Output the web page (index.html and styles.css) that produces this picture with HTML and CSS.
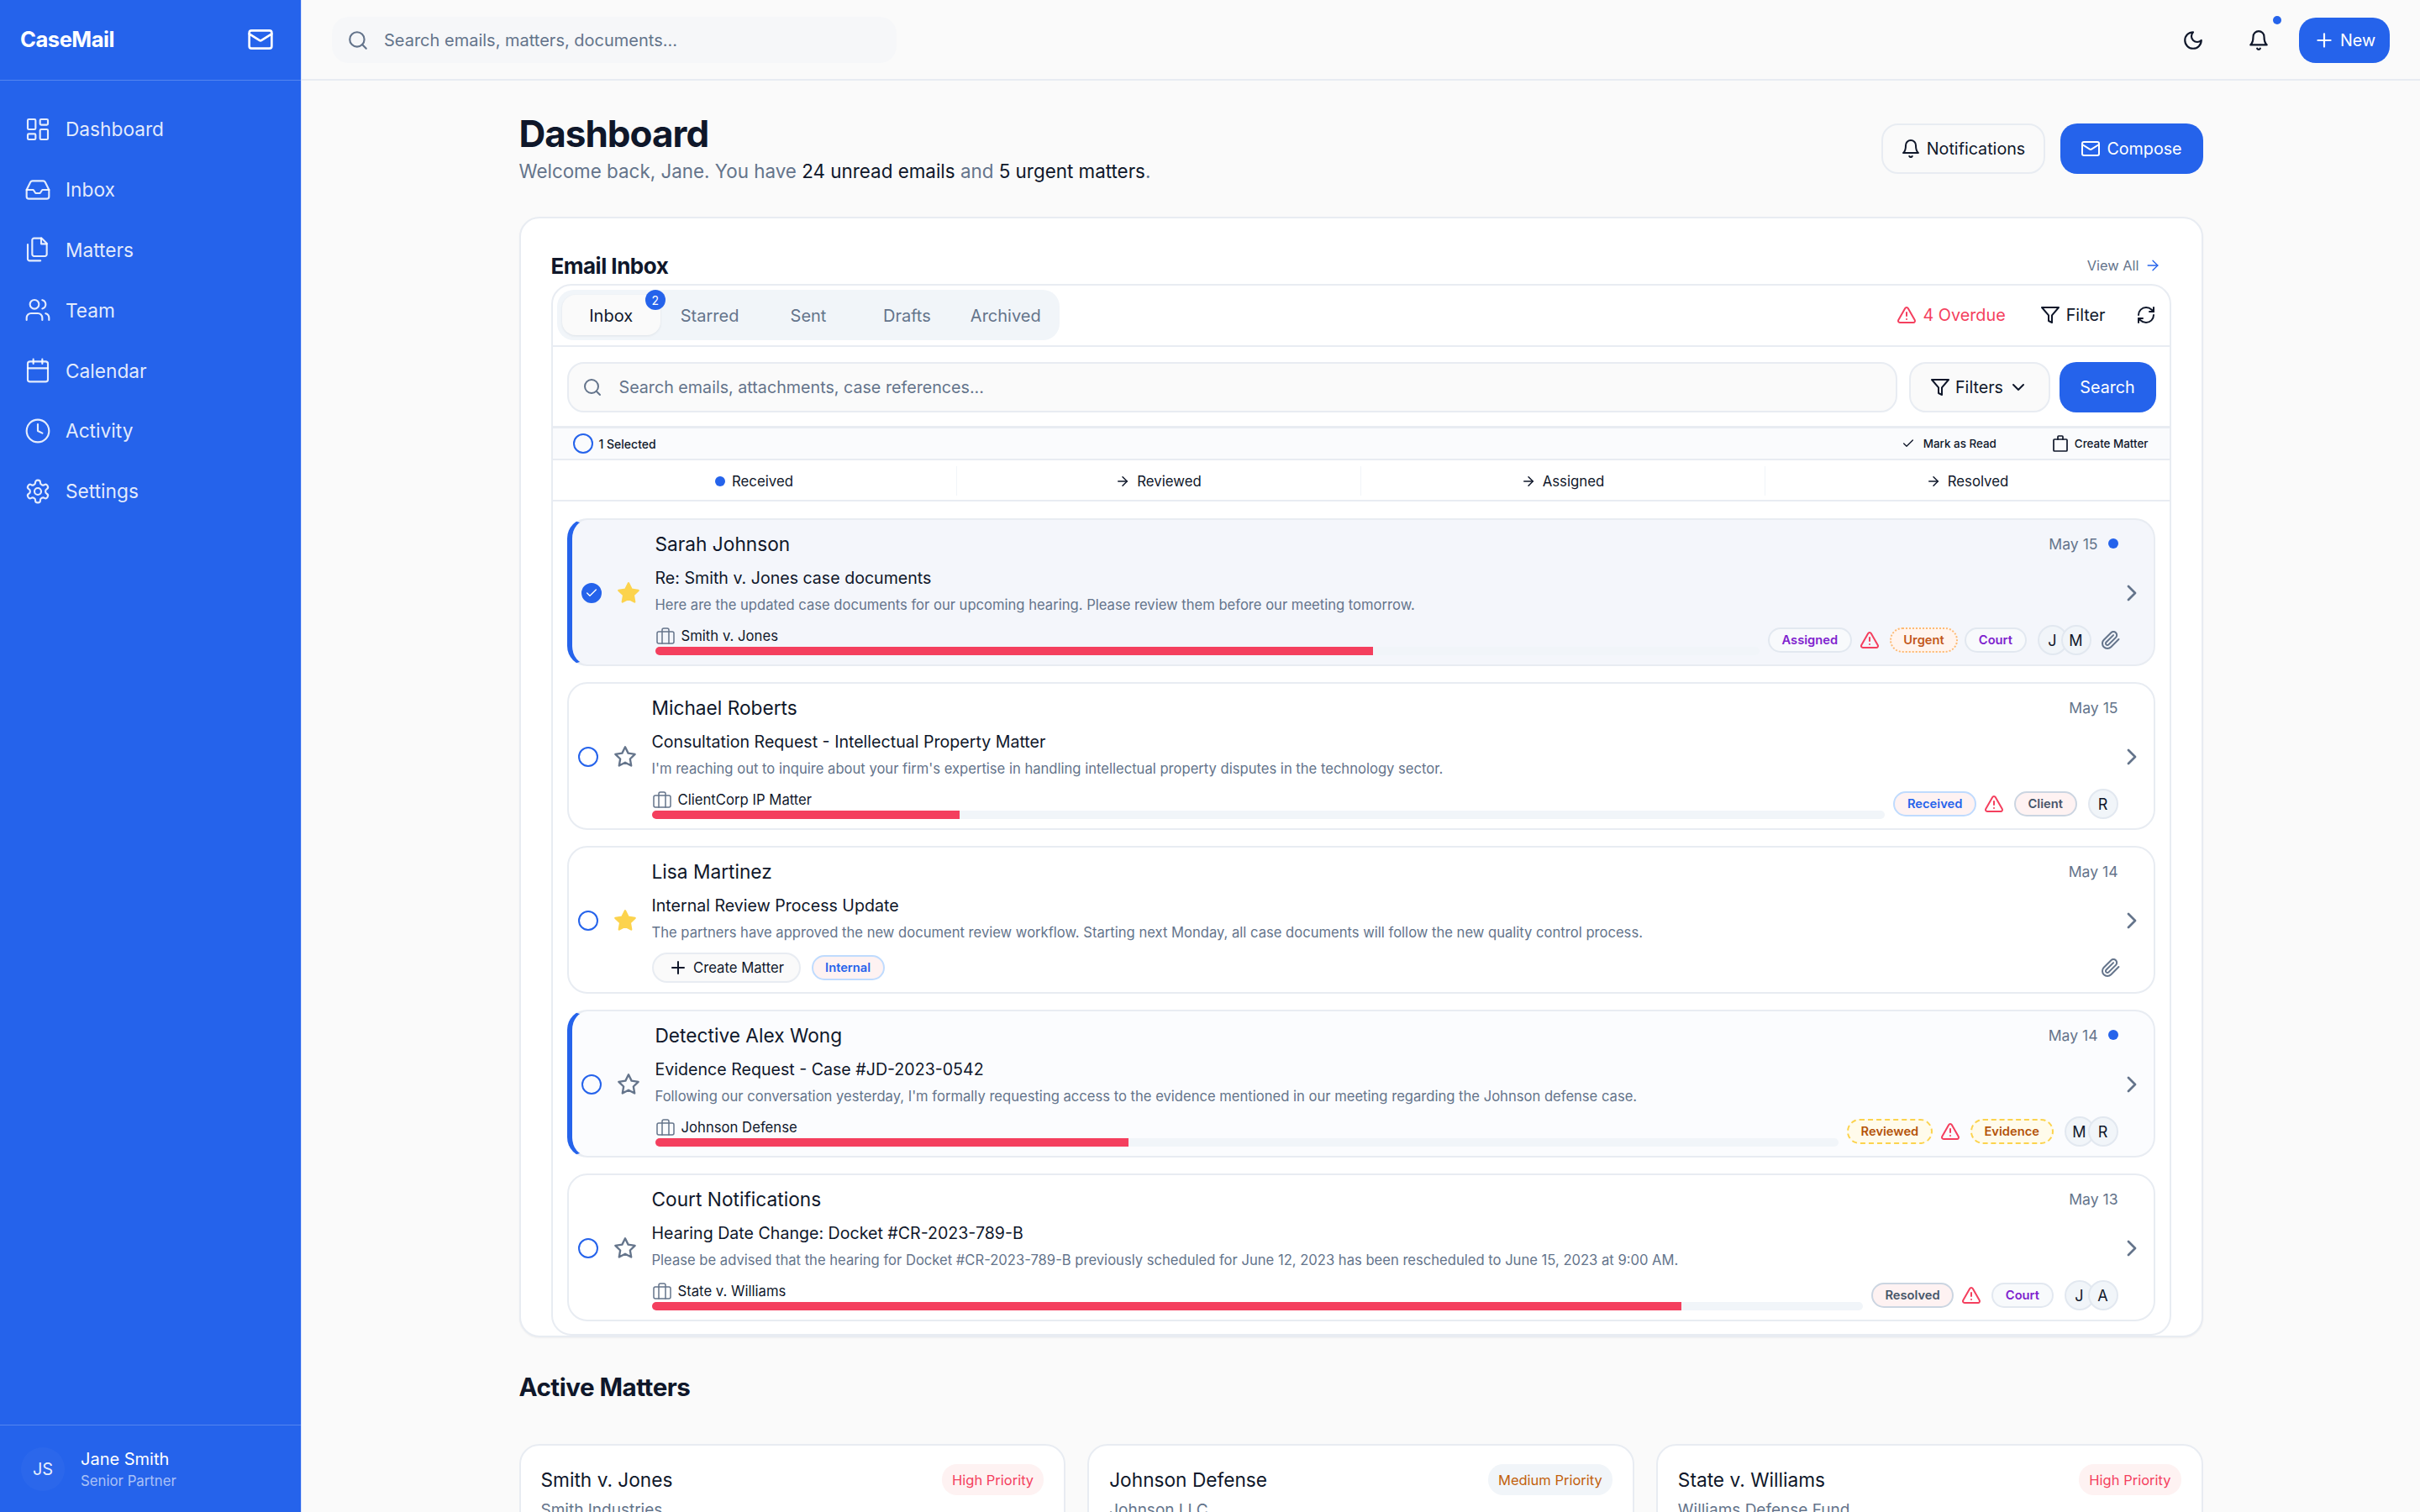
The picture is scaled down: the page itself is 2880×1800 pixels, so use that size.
FILE: index.html
```html
<!DOCTYPE html>
<html>
<head>
  <meta charset="utf-8">
  <title>CaseMail</title>
  <link rel="stylesheet" href="styles.css">
</head>
<body>

  <svg class="sprite" xmlns="http://www.w3.org/2000/svg">
    <symbol id="i-mail" viewBox="0 0 24 24"><rect x="2" y="4" width="20" height="16" rx="2"/><path d="m22 7-8.97 5.7a1.94 1.94 0 0 1-2.06 0L2 7"/></symbol>
    <symbol id="i-dashboard" viewBox="0 0 24 24"><rect x="3" y="3" width="7" height="9" rx="1"/><rect x="14" y="3" width="7" height="5" rx="1"/><rect x="14" y="12" width="7" height="9" rx="1"/><rect x="3" y="16" width="7" height="5" rx="1"/></symbol>
    <symbol id="i-inbox" viewBox="0 0 24 24"><path d="M22 12h-6l-2 3h-4l-2-3H2"/><path d="M5.45 5.11 2 12v6a2 2 0 0 0 2 2h16a2 2 0 0 0 2-2v-6l-3.45-6.89A2 2 0 0 0 16.76 4H7.24a2 2 0 0 0-1.79 1.11z"/></symbol>
    <symbol id="i-files" viewBox="0 0 24 24"><path d="M15.5 2H8.6c-.4 0-.8.2-1.1.5-.3.3-.5.7-.5 1.1v12.8c0 .4.2.8.5 1.1.3.3.7.5 1.1.5h9.8c.4 0 .8-.2 1.1-.5.3-.3.5-.7.5-1.1V6.5L15.5 2z"/><path d="M3 7.6v12.8c0 .4.2.8.5 1.1.3.3.7.5 1.1.5h9.8"/><path d="M15 2v5h5"/></symbol>
    <symbol id="i-users" viewBox="0 0 24 24"><path d="M16 21v-2a4 4 0 0 0-4-4H6a4 4 0 0 0-4 4v2"/><circle cx="9" cy="7" r="4"/><path d="M22 21v-2a4 4 0 0 0-3-3.87"/><path d="M16 3.13a4 4 0 0 1 0 7.75"/></symbol>
    <symbol id="i-calendar" viewBox="0 0 24 24"><rect x="3" y="4" width="18" height="18" rx="2"/><path d="M16 2v4"/><path d="M8 2v4"/><path d="M3 10h18"/></symbol>
    <symbol id="i-clock" viewBox="0 0 24 24"><circle cx="12" cy="12" r="10"/><path d="M12 6v6l4 2"/></symbol>
    <symbol id="i-settings" viewBox="0 0 24 24"><path d="M12.22 2h-.44a2 2 0 0 0-2 2v.18a2 2 0 0 1-1 1.73l-.43.25a2 2 0 0 1-2 0l-.15-.08a2 2 0 0 0-2.73.73l-.22.38a2 2 0 0 0 .73 2.73l.15.1a2 2 0 0 1 1 1.72v.51a2 2 0 0 1-1 1.74l-.15.09a2 2 0 0 0-.73 2.73l.22.38a2 2 0 0 0 2.73.73l.15-.08a2 2 0 0 1 2 0l.43.25a2 2 0 0 1 1 1.73V20a2 2 0 0 0 2 2h.44a2 2 0 0 0 2-2v-.18a2 2 0 0 1 1-1.73l.43-.25a2 2 0 0 1 2 0l.15.08a2 2 0 0 0 2.73-.73l.22-.39a2 2 0 0 0-.73-2.73l-.15-.08a2 2 0 0 1-1-1.74v-.5a2 2 0 0 1 1-1.74l.15-.09a2 2 0 0 0 .73-2.73l-.22-.38a2 2 0 0 0-2.73-.73l-.15.08a2 2 0 0 1-2 0l-.43-.25a2 2 0 0 1-1-1.73V4a2 2 0 0 0-2-2z"/><circle cx="12" cy="12" r="3"/></symbol>
    <symbol id="i-search" viewBox="0 0 24 24"><circle cx="11" cy="11" r="8"/><path d="m21 21-4.3-4.3"/></symbol>
    <symbol id="i-moon" viewBox="0 0 24 24"><path d="M12 3a6 6 0 0 0 9 9 9 9 0 1 1-9-9Z"/></symbol>
    <symbol id="i-bell" viewBox="0 0 24 24"><path d="M6 8a6 6 0 0 1 12 0c0 7 3 9 3 9H3s3-2 3-9"/><path d="M10.3 21a1.94 1.94 0 0 0 3.4 0"/></symbol>
    <symbol id="i-plus" viewBox="0 0 24 24"><path d="M5 12h14"/><path d="M12 5v14"/></symbol>
    <symbol id="i-arrow" viewBox="0 0 24 24"><path d="M5 12h14"/><path d="m12 5 7 7-7 7"/></symbol>
    <symbol id="i-alert" viewBox="0 0 24 24"><path d="m21.73 18-8-14a2 2 0 0 0-3.48 0l-8 14A2 2 0 0 0 4 21h16a2 2 0 0 0 1.73-3Z"/><path d="M12 9v4"/><path d="M12 17h.01"/></symbol>
    <symbol id="i-funnel" viewBox="0 0 24 24"><path d="M22 3H2l8 9.46V19l4 2v-8.54L22 3z"/></symbol>
    <symbol id="i-refresh" viewBox="0 0 24 24"><path d="M3 12a9 9 0 0 1 9-9 9.75 9.75 0 0 1 6.74 2.74L21 8"/><path d="M21 3v5h-5"/><path d="M21 12a9 9 0 0 1-9 9 9.75 9.75 0 0 1-6.74-2.74L3 16"/><path d="M8 16H3v5"/></symbol>
    <symbol id="i-chevron-down" viewBox="0 0 24 24"><path d="m6 9 6 6 6-6"/></symbol>
    <symbol id="i-chevron-right" viewBox="0 0 24 24"><path d="m9 18 6-6-6-6"/></symbol>
    <symbol id="i-check" viewBox="0 0 24 24"><path d="M20 6 9 17l-5-5"/></symbol>
    <symbol id="i-case" viewBox="0 0 24 24"><rect x="4" y="7" width="16" height="14" rx="1"/><path d="M15 7V4a1 1 0 0 0-1-1h-4a1 1 0 0 0-1 1v3"/></symbol>
    <symbol id="i-briefcase" viewBox="0 0 24 24"><rect x="2" y="7" width="20" height="14" rx="2"/><path d="M16 21V5a2 2 0 0 0-2-2h-4a2 2 0 0 0-2 2v16"/></symbol>
    <symbol id="i-star" viewBox="0 0 24 24"><path d="M12 2l3.09 6.26L22 9.27l-5 4.87 1.18 6.88L12 17.77l-6.18 3.25L7 14.14 2 9.27l6.91-1.01L12 2z"/></symbol>
    <symbol id="i-clip" viewBox="0 0 24 24"><path d="m21.44 11.05-9.19 9.19a6 6 0 0 1-8.49-8.49l8.57-8.57A4 4 0 1 1 18 8.84l-8.59 8.57a2 2 0 0 1-2.83-2.83l8.49-8.48"/></symbol>
  </svg>

  <div class="app">

    <aside class="sidebar">
      <div class="brand">
        <span class="brand-name">CaseMail</span>
        <svg class="icon icon-32"><use href="#i-mail"/></svg>
      </div>
      <nav class="nav">
        <a class="nav-item"><svg class="icon nav-icon"><use href="#i-dashboard"/></svg>Dashboard</a>
        <a class="nav-item"><svg class="icon nav-icon"><use href="#i-inbox"/></svg>Inbox</a>
        <a class="nav-item"><svg class="icon nav-icon"><use href="#i-files"/></svg>Matters</a>
        <a class="nav-item"><svg class="icon nav-icon"><use href="#i-users"/></svg>Team</a>
        <a class="nav-item"><svg class="icon nav-icon"><use href="#i-calendar"/></svg>Calendar</a>
        <a class="nav-item"><svg class="icon nav-icon"><use href="#i-clock"/></svg>Activity</a>
        <a class="nav-item"><svg class="icon nav-icon"><use href="#i-settings"/></svg>Settings</a>
      </nav>
      <div class="user">
        <div class="user-avatar">JS</div>
        <div>
          <div class="user-name">Jane Smith</div>
          <div class="user-role">Senior Partner</div>
        </div>
      </div>
    </aside>

    <div class="main">

      <header class="topbar">
        <div class="top-search">
          <svg class="icon icon-26"><use href="#i-search"/></svg>
          <span>Search emails, matters, documents...</span>
        </div>
        <div class="top-actions">
          <svg class="icon icon-26 top-moon"><use href="#i-moon"/></svg>
          <span class="top-bell"><svg class="icon icon-26"><use href="#i-bell"/></svg><i class="bell-dot"></i></span>
          <button class="btn btn-primary btn-new"><svg class="icon icon-26"><use href="#i-plus"/></svg>New</button>
        </div>
      </header>

      <div class="content">

        <div class="page-head">
          <div>
            <h1>Dashboard</h1>
            <p>Welcome back, Jane. You have <b>24 unread emails</b> and <b>5 urgent matters</b>.</p>
          </div>
          <div class="page-actions">
            <button class="btn btn-light"><svg class="icon icon-24"><use href="#i-bell"/></svg>Notifications</button>
            <button class="btn btn-primary"><svg class="icon icon-24"><use href="#i-mail"/></svg>Compose</button>
          </div>
        </div>

        <section class="panel">
          <div class="panel-head">
            <h2>Email Inbox</h2>
            <a class="view-all">View All <svg class="icon icon-20"><use href="#i-arrow"/></svg></a>
          </div>

          <div class="inbox">
            <div class="inbox-tabs">
              <div class="tabs">
                <div class="tab tab-active">Inbox<span class="tab-badge">2</span></div>
                <div class="tab">Starred</div>
                <div class="tab">Sent</div>
                <div class="tab">Drafts</div>
                <div class="tab">Archived</div>
              </div>
              <div class="tab-tools">
                <span class="overdue"><svg class="icon icon-24"><use href="#i-alert"/></svg>4 Overdue</span>
                <span class="tool"><svg class="icon icon-24"><use href="#i-funnel"/></svg>Filter</span>
                <svg class="icon icon-24"><use href="#i-refresh"/></svg>
              </div>
            </div>

            <div class="inbox-search">
              <div class="search-field">
                <svg class="icon icon-24"><use href="#i-search"/></svg>
                <span>Search emails, attachments, case references...</span>
              </div>
              <button class="btn btn-light btn-filters"><svg class="icon icon-24"><use href="#i-funnel"/></svg>Filters<svg class="icon icon-24"><use href="#i-chevron-down"/></svg></button>
              <button class="btn btn-primary btn-search">Search</button>
            </div>

            <div class="bulk-bar">
              <div class="bulk-left"><span class="round-check"></span>1 Selected</div>
              <div class="bulk-right">
                <span class="bulk-read"><svg class="icon icon-16"><use href="#i-check"/></svg>Mark as Read</span>
                <span class="bulk-create"><svg class="icon icon-24"><use href="#i-case"/></svg>Create Matter</span>
              </div>
            </div>

            <div class="stages">
              <div class="stage"><i class="stage-dot"></i>Received</div>
              <div class="stage"><svg class="icon icon-16"><use href="#i-arrow"/></svg>Reviewed</div>
              <div class="stage"><svg class="icon icon-16"><use href="#i-arrow"/></svg>Assigned</div>
              <div class="stage"><svg class="icon icon-16"><use href="#i-arrow"/></svg>Resolved</div>
            </div>

            <div class="email-list">

              <article class="email email-unread email-selected">
                <span class="round-check round-check-on"><svg class="icon icon-16"><use href="#i-check"/></svg></span>
                <svg class="icon star star-on"><use href="#i-star"/></svg>
                <div class="email-body">
                  <div class="email-top"><span class="email-name">Sarah Johnson</span><span class="email-date">May 15<i class="unread-dot"></i></span></div>
                  <div class="email-subject">Re: Smith v. Jones case documents</div>
                  <div class="email-preview">Here are the updated case documents for our upcoming hearing. Please review them before our meeting tomorrow.</div>
                  <div class="email-bottom">
                    <div class="matter">
                      <div class="matter-name"><svg class="icon icon-24"><use href="#i-briefcase"/></svg>Smith v. Jones</div>
                      <div class="bar"><div class="bar-fill" style="width: 65%"></div></div>
                    </div>
                    <div class="tags">
                      <span class="tag tag-purple">Assigned</span>
                      <svg class="icon warn"><use href="#i-alert"/></svg>
                      <span class="tag tag-orange">Urgent</span>
                      <span class="tag tag-purple">Court</span>
                      <div class="avatars"><span>J</span><span>M</span></div>
                      <svg class="icon clip"><use href="#i-clip"/></svg>
                    </div>
                  </div>
                </div>
                <svg class="icon chevron"><use href="#i-chevron-right"/></svg>
              </article>

              <article class="email">
                <span class="round-check"></span>
                <svg class="icon star"><use href="#i-star"/></svg>
                <div class="email-body">
                  <div class="email-top"><span class="email-name">Michael Roberts</span><span class="email-date">May 15</span></div>
                  <div class="email-subject">Consultation Request - Intellectual Property Matter</div>
                  <div class="email-preview">I'm reaching out to inquire about your firm's expertise in handling intellectual property disputes in the technology sector.</div>
                  <div class="email-bottom">
                    <div class="matter">
                      <div class="matter-name"><svg class="icon icon-24"><use href="#i-briefcase"/></svg>ClientCorp IP Matter</div>
                      <div class="bar"><div class="bar-fill" style="width: 25%"></div></div>
                    </div>
                    <div class="tags">
                      <span class="tag tag-blue">Received</span>
                      <svg class="icon warn"><use href="#i-alert"/></svg>
                      <span class="tag tag-grey">Client</span>
                      <div class="avatars"><span>R</span></div>
                    </div>
                  </div>
                </div>
                <svg class="icon chevron"><use href="#i-chevron-right"/></svg>
              </article>

              <article class="email">
                <span class="round-check"></span>
                <svg class="icon star star-on"><use href="#i-star"/></svg>
                <div class="email-body">
                  <div class="email-top"><span class="email-name">Lisa Martinez</span><span class="email-date">May 14</span></div>
                  <div class="email-subject">Internal Review Process Update</div>
                  <div class="email-preview">The partners have approved the new document review workflow. Starting next Monday, all case documents will follow the new quality control process.</div>
                  <div class="email-bottom">
                    <div class="create-row">
                      <button class="create-btn"><svg class="icon icon-24"><use href="#i-plus"/></svg>Create Matter</button>
                      <span class="tag tag-blue">Internal</span>
                    </div>
                    <svg class="icon clip"><use href="#i-clip"/></svg>
                  </div>
                </div>
                <svg class="icon chevron"><use href="#i-chevron-right"/></svg>
              </article>

              <article class="email email-unread">
                <span class="round-check"></span>
                <svg class="icon star"><use href="#i-star"/></svg>
                <div class="email-body">
                  <div class="email-top"><span class="email-name">Detective Alex Wong</span><span class="email-date">May 14<i class="unread-dot"></i></span></div>
                  <div class="email-subject">Evidence Request - Case #JD-2023-0542</div>
                  <div class="email-preview">Following our conversation yesterday, I'm formally requesting access to the evidence mentioned in our meeting regarding the Johnson defense case.</div>
                  <div class="email-bottom">
                    <div class="matter">
                      <div class="matter-name"><svg class="icon icon-24"><use href="#i-briefcase"/></svg>Johnson Defense</div>
                      <div class="bar"><div class="bar-fill" style="width: 40%"></div></div>
                    </div>
                    <div class="tags">
                      <span class="tag tag-amber">Reviewed</span>
                      <svg class="icon warn"><use href="#i-alert"/></svg>
                      <span class="tag tag-amber">Evidence</span>
                      <div class="avatars"><span>M</span><span>R</span></div>
                    </div>
                  </div>
                </div>
                <svg class="icon chevron"><use href="#i-chevron-right"/></svg>
              </article>

              <article class="email">
                <span class="round-check"></span>
                <svg class="icon star"><use href="#i-star"/></svg>
                <div class="email-body">
                  <div class="email-top"><span class="email-name">Court Notifications</span><span class="email-date">May 13</span></div>
                  <div class="email-subject">Hearing Date Change: Docket #CR-2023-789-B</div>
                  <div class="email-preview">Please be advised that the hearing for Docket #CR-2023-789-B previously scheduled for June 12, 2023 has been rescheduled to June 15, 2023 at 9:00 AM.</div>
                  <div class="email-bottom">
                    <div class="matter">
                      <div class="matter-name"><svg class="icon icon-24"><use href="#i-briefcase"/></svg>State v. Williams</div>
                      <div class="bar"><div class="bar-fill" style="width: 85%"></div></div>
                    </div>
                    <div class="tags">
                      <span class="tag tag-grey">Resolved</span>
                      <svg class="icon warn"><use href="#i-alert"/></svg>
                      <span class="tag tag-purple">Court</span>
                      <div class="avatars"><span>J</span><span>A</span></div>
                    </div>
                  </div>
                </div>
                <svg class="icon chevron"><use href="#i-chevron-right"/></svg>
              </article>

            </div>
          </div>
        </section>

        <h2 class="section-title">Active Matters</h2>

        <div class="matter-grid">
          <div class="matter-card">
            <div class="matter-card-top"><span class="matter-title">Smith v. Jones</span><span class="priority priority-high">High Priority</span></div>
            <div class="matter-client">Smith Industries</div>
          </div>
          <div class="matter-card">
            <div class="matter-card-top"><span class="matter-title">Johnson Defense</span><span class="priority priority-medium">Medium Priority</span></div>
            <div class="matter-client">Johnson LLC</div>
          </div>
          <div class="matter-card">
            <div class="matter-card-top"><span class="matter-title">State v. Williams</span><span class="priority priority-high">High Priority</span></div>
            <div class="matter-client">Williams Defense Fund</div>
          </div>
        </div>

      </div>
    </div>
  </div>

</body>
</html>
```

FILE: styles.css
```css
* {
  box-sizing: border-box;
}

body {
  margin: 0;
  font-family: Inter, "Noto Sans", sans-serif;
  color: #0f172a;
  background-color: #fafafa;
}

.sprite {
  display: none;
}

.icon {
  flex: none;
  fill: none;
  stroke: currentColor;
  stroke-width: 2;
  stroke-linecap: round;
  stroke-linejoin: round;
}

.icon-16 { width: 16px; height: 16px; }
.icon-20 { width: 20px; height: 20px; }
.icon-24 { width: 24px; height: 24px; }
.icon-26 { width: 26px; height: 26px; }
.icon-32 { width: 32px; height: 32px; }

.app {
  display: flex;
  height: 100vh;
  overflow: hidden;
}

/* sidebar */
.sidebar {
  width: 359px;
  flex: none;
  display: flex;
  flex-direction: column;
  background-color: #2563eb;
  border-right: 1px solid #d7e2fb;
  color: #fff;
}

.brand {
  height: 96px;
  padding: 0 32px 2px 24px;
  display: flex;
  align-items: center;
  justify-content: space-between;
  border-bottom: 1px solid rgba(255, 255, 255, 0.22);
}

.brand-name {
  font-size: 25.6px;
  font-weight: 700;
  letter-spacing: -0.5px;
}

.nav {
  flex: 1;
  padding-top: 22px;
  display: flex;
  flex-direction: column;
}

.nav-item {
  height: 71.8px;
  padding-left: 29px;
  display: flex;
  align-items: center;
  gap: 17px;
  font-size: 22.7px;
  color: rgba(255, 255, 255, 0.88);
}

.nav-icon {
  width: 32px;
  height: 32px;
  stroke-width: 1.6;
}

.user {
  height: 104px;
  padding-left: 25px;
  display: flex;
  align-items: center;
  gap: 19px;
  border-top: 1px solid rgba(255, 255, 255, 0.22);
}

.user-avatar {
  width: 52px;
  height: 52px;
  border-radius: 50%;
  background-color: rgba(255, 255, 255, 0.03);
  display: flex;
  align-items: center;
  justify-content: center;
  font-size: 20px;
  color: rgba(255, 255, 255, 0.9);
}

.user-name {
  font-size: 20px;
  line-height: 28px;
}

.user-role {
  font-size: 16.8px;
  line-height: 24px;
  color: rgba(255, 255, 255, 0.62);
}

/* top bar */
.main {
  flex: 1;
  min-width: 0;
  display: flex;
  flex-direction: column;
}

.topbar {
  height: 96px;
  flex: none;
  padding: 1px 36px 0;
  display: flex;
  align-items: center;
  justify-content: space-between;
  border-bottom: 2px solid #e8ecf2;
}

.top-search {
  width: 672px;
  height: 55px;
  padding-left: 18px;
  display: flex;
  align-items: center;
  gap: 18px;
  background-color: #f6f7f9;
  border-radius: 20px;
  font-size: 20px;
  color: #64748b;
}

.top-actions {
  display: flex;
  align-items: center;
}

.top-moon {
  margin-right: 52px;
}

.top-bell {
  position: relative;
  display: flex;
  margin-right: 35px;
}

.bell-dot {
  position: absolute;
  top: -16px;
  right: -14px;
  width: 10px;
  height: 10px;
  border-radius: 50%;
  background-color: #2563eb;
}

.btn {
  display: inline-flex;
  align-items: center;
  justify-content: center;
  font-family: inherit;
  font-size: 19.7px;
  border-radius: 20px;
  border: 2px solid transparent;
  color: #0f172a;
  background: none;
}

.btn-primary {
  background-color: #2563eb;
  color: #fff;
}

.btn-light {
  background-color: #fafafa;
  border-color: #e8ecf2;
}

.btn-new {
  width: 108px;
  height: 54px;
  gap: 6px;
}

/* page head */
.content {
  flex: 1;
  width: 2004px;
  margin: 0 auto;
}

.page-head {
  height: 162px;
  padding-top: 36px;
  display: flex;
  align-items: flex-start;
  justify-content: space-between;
}

h1 {
  margin: 0;
  font-size: 44px;
  line-height: 54px;
  font-weight: 700;
  letter-spacing: -1px;
}

.page-head p {
  margin: 3px 0 0;
  font-size: 22.4px;
  line-height: 30px;
  color: #64748b;
}

.page-head b {
  font-weight: 400;
  color: #0f172a;
}

.page-actions {
  margin-top: 15px;
  display: flex;
  gap: 18px;
}

.page-actions .btn {
  height: 60px;
  gap: 7px;
}

.page-actions .btn-light {
  width: 195px;
}

.page-actions .btn-primary {
  width: 170px;
}

/* inbox panel */
.panel {
  padding: 0 36px;
  background-color: #fff;
  border: 2px solid #e8ecf2;
  border-radius: 24px;
  box-shadow: 0 1px 2px rgba(15, 23, 42, 0.05);
}

.panel-head {
  height: 78px;
  padding: 34px 12px 0 0;
  display: flex;
  align-items: center;
  justify-content: space-between;
}

h2 {
  margin: 0;
  font-size: 26px;
  font-weight: 700;
  letter-spacing: -0.5px;
}

.view-all {
  display: flex;
  align-items: center;
  gap: 6px;
  font-size: 16.4px;
  color: #64748b;
}

.view-all .icon {
  color: #2563eb;
  stroke-width: 1.6;
}

.inbox {
  border: 2px solid #e8ecf2;
  border-radius: 24px;
}

.inbox-tabs {
  height: 73px;
  padding: 5px 16px 0 5px;
  display: flex;
  justify-content: space-between;
  align-items: flex-start;
  border-bottom: 2px solid #e8ecf2;
}

.tabs {
  display: flex;
  height: 60px;
  padding: 6px 6px;
  background-color: #f1f5f9;
  border-radius: 20px;
}

.tab {
  position: relative;
  width: 117.4px;
  padding-top: 1px;
  display: flex;
  align-items: center;
  justify-content: center;
  font-size: 20px;
  color: #64748b;
  border-radius: 16px;
}

.tab-active {
  background-color: #fafafa;
  color: #0f172a;
  box-shadow: 0 1px 3px rgba(15, 23, 42, 0.08);
}

.tab-badge {
  position: absolute;
  top: -6px;
  right: -6px;
  width: 24px;
  height: 24px;
  border-radius: 50%;
  background-color: #2563eb;
  color: #fff;
  font-size: 14px;
  display: flex;
  align-items: center;
  justify-content: center;
}

.tab-tools {
  height: 60px;
  display: flex;
  align-items: center;
  font-size: 19.8px;
}

.overdue {
  display: flex;
  align-items: center;
  gap: 7px;
  color: #f43f5e;
  margin-right: 41px;
}

.tool {
  display: flex;
  align-items: center;
  gap: 7px;
  margin-right: 36px;
}

.inbox-search {
  height: 97px;
  padding: 18px 16px 0 17px;
  display: flex;
  gap: 14px;
  border-bottom: 3px solid #e8ecf2;
}

.search-field {
  flex: 1;
  height: 60px;
  padding-left: 16px;
  display: flex;
  align-items: center;
  gap: 20px;
  background-color: #fafafa;
  border: 2px solid #e8ecf2;
  border-radius: 20px;
  font-size: 19.7px;
  color: #64748b;
}

.btn-filters {
  width: 168px;
  height: 60px;
  gap: 6px;
}

.btn-search {
  width: 115px;
  height: 60px;
  margin-left: -3px;
}

.bulk-bar {
  height: 38px;
  padding: 0 25px 0 24px;
  display: flex;
  align-items: center;
  justify-content: space-between;
  background-color: #fafbfd;
  border-bottom: 2px solid #e8ecf2;
  font-size: 14px;
  font-weight: 500;
}

.bulk-left {
  display: flex;
  align-items: center;
  gap: 7px;
}

.bulk-right {
  display: flex;
  gap: 64px;
  font-size: 13.4px;
}

.bulk-read,
.bulk-create {
  display: flex;
  align-items: center;
}

.bulk-read {
  gap: 10px;
}

.bulk-create {
  gap: 5px;
}

.bulk-create .icon {
  stroke-width: 1.7;
}

.round-check {
  width: 24px;
  height: 24px;
  flex: none;
  border: 2px solid #2563eb;
  border-radius: 50%;
  display: flex;
  align-items: center;
  justify-content: center;
}

.round-check-on {
  background-color: #2563eb;
  color: #fff;
}

.stages {
  height: 49px;
  padding: 7px 0 5px;
  display: grid;
  grid-template-columns: repeat(4, 1fr);
  border-bottom: 2px solid #e8ecf2;
}

.stage {
  display: flex;
  align-items: center;
  justify-content: center;
  gap: 8px;
  font-size: 16.8px;
  border-right: 1px solid #f1f5f9;
}

.stage:last-child {
  border-right: none;
}

.stage .icon {
  width: 18px;
  height: 18px;
}

.stage-dot {
  width: 12px;
  height: 12px;
  border-radius: 50%;
  background-color: #2563eb;
}

/* emails */
.email-list {
  padding: 20px 17px 15px;
  display: flex;
  flex-direction: column;
  gap: 19px;
}

.email {
  height: 176px;
  padding: 1px 10px 0 11px;
  display: flex;
  align-items: center;
  background-color: #fff;
  border: 2px solid #e8ecf2;
  border-radius: 24px;
}

.email-unread {
  border-left: 6px solid #2563eb;
  background-color: #fbfcfe;
}

.email-selected {
  background-color: #f4f6fb;
}

.star {
  width: 28px;
  height: 28px;
  margin: 0 18px;
  color: #64748b;
}

.star-on {
  fill: #fcd34d;
  color: #fcd34d;
}

.email-body {
  flex: 1;
  min-width: 0;
  align-self: flex-start;
  padding-top: 12px;
}

.email-top {
  height: 30px;
  display: flex;
  align-items: center;
  justify-content: space-between;
}

.email-name {
  font-size: 22.7px;
}

.email-date {
  display: flex;
  align-items: center;
  font-size: 17.6px;
  color: #64748b;
}

.unread-dot {
  width: 12px;
  height: 12px;
  margin-left: 12px;
  border-radius: 50%;
  background-color: #2563eb;
}

.email-subject {
  margin-top: 12px;
  font-size: 19.6px;
  line-height: 28px;
}

.email-preview {
  margin-top: 6px;
  font-size: 16.6px;
  line-height: 24px;
  color: #64748b;
}

.email-bottom {
  margin-top: 12px;
  height: 36px;
  display: flex;
  align-items: center;
  justify-content: space-between;
}

.email-bottom > .clip {
  margin: 0 -3px 0 0;
}

.matter {
  flex: 1;
  min-width: 0;
}

.matter-name {
  height: 26px;
  display: flex;
  align-items: center;
  gap: 7px;
  font-size: 16.7px;
}

.matter-name .icon {
  color: #64748b;
  stroke-width: 1.5;
}

.bar {
  height: 10px;
  background-color: #f1f5f9;
  border-radius: 5px;
  overflow: hidden;
}

.bar-fill {
  height: 100%;
  background-color: #f43f5e;
}

.tags {
  margin-left: 10px;
  display: flex;
  align-items: center;
  gap: 8px;
}

.tag {
  height: 30px;
  padding: 0 14.6px;
  display: inline-flex;
  align-items: center;
  border: 2px solid #e2e8f0;
  border-radius: 15px;
  background-color: #f8fafc;
  font-size: 14.7px;
  font-weight: 600;
}

.tag-purple {
  color: #7e22ce;
}

.tag-orange {
  color: #c2571a;
  background-color: #fff4ee;
  border: 2px dotted #fdba74;
}

.tag-blue {
  color: #2563eb;
  background-color: #fef2f2;
  border-color: #bfdbfe;
}

.tag-grey {
  color: #475569;
  background-color: #fef2f2;
  border-color: #cbd5e1;
}

.tag-amber {
  color: #b45309;
  background-color: #fffbeb;
  border: 2px dashed #fcd34d;
}

.warn {
  width: 24px;
  height: 24px;
  margin: 0 4px 0 1px;
  color: #f43f5e;
}

.avatars {
  margin-left: 5px;
  display: flex;
}

.avatars span {
  width: 36px;
  height: 36px;
  display: flex;
  align-items: center;
  justify-content: center;
  background-color: #f1f5f9;
  border: 2px solid #e2e8f0;
  border-radius: 50%;
  font-size: 18px;
}

.avatars span + span {
  margin-left: -8px;
}

.clip {
  width: 24px;
  height: 24px;
  margin: 0 -3px 0 3px;
  color: #64748b;
}

.create-row {
  display: flex;
  align-items: center;
  gap: 13px;
}

.create-btn {
  width: 177px;
  height: 36px;
  display: inline-flex;
  align-items: center;
  justify-content: center;
  gap: 6px;
  font-family: inherit;
  font-size: 16.7px;
  color: #0f172a;
  background-color: #fafafa;
  border: 2px solid #e8ecf2;
  border-radius: 18px;
}

.chevron {
  width: 32px;
  height: 32px;
  color: #64748b;
}

/* matters */
.section-title {
  margin: 38px 0 47px;
  font-size: 29.6px;
  line-height: 42px;
}

.matter-grid {
  display: grid;
  grid-template-columns: repeat(3, 1fr);
  gap: 26px;
}

.matter-card {
  height: 240px;
  padding: 22px 24px;
  background-color: #fff;
  border: 2px solid #e8ecf2;
  border-radius: 24px;
}

.matter-card-top {
  display: flex;
  align-items: center;
  justify-content: space-between;
}

.matter-title {
  font-size: 22.7px;
}

.priority {
  height: 37px;
  padding: 0 12px;
  display: flex;
  align-items: center;
  border-radius: 18px;
  font-size: 16.5px;
}

.priority-high {
  color: #f43f5e;
  background-color: #fef2f2;
}

.priority-medium {
  color: #c2610c;
  background-color: #f1f5f9;
}

.matter-client {
  margin-top: 6px;
  font-size: 19px;
  color: #64748b;
}
```
